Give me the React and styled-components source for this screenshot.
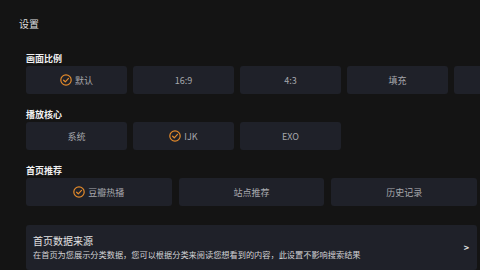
import styled, { createGlobalStyle } from 'styled-components';

const GlobalStyle = createGlobalStyle`
  html, body {
    margin: 0;
    padding: 0;
    background: #141414;
    overflow: hidden;
  }
  body {
    font-family: "Noto Sans CJK SC", "Noto Sans", sans-serif;
  }
`;

const Page = styled.div`
  width: 480px;
  height: 270px;
  padding: 18px 3px 0 26px;
  box-sizing: border-box;
  display: flex;
  flex-direction: column;
`;

const Title = styled.div`
  margin-left: -7px;
  height: 12px;
  line-height: 12px;
  font-size: 10px;
  color: #dedede;
  margin-bottom: 23px;
`;

const Section = styled.section`
  display: flex;
  flex-direction: column;
  margin-bottom: ${({ $gap }) => $gap}px;
`;

const Label = styled.div`
  height: 12px;
  line-height: 12px;
  font-size: 9px;
  font-weight: 700;
  color: #f0f0f0;
  margin-bottom: 1px;
`;

const FlexRow = styled.div`
  display: flex;
  gap: 6px;
`;

const GridRow = styled.div`
  display: grid;
  grid-template-columns: repeat(3, 1fr);
  gap: 7px;
`;

const Option = styled.div`
  flex: 0 0 ${({ $width }) => ($width ? `${$width}px` : 'auto')};
  height: 28px;
  border-radius: 3px;
  background: #1f2129;
  display: flex;
  align-items: center;
  justify-content: center;
  gap: 3px;
  font-size: 9px;
  color: #a7a8ad;
  white-space: nowrap;
`;

const Card = styled.div`
  height: 45px;
  border-radius: 3px;
  background: #1f2129;
  box-sizing: border-box;
  padding: 9px 8px 0 7px;
  display: flex;
  align-items: flex-start;
  justify-content: space-between;
`;

const CardText = styled.div`
  display: flex;
  flex-direction: column;
`;

const CardTitle = styled.div`
  font-size: 10px;
  line-height: 13px;
  color: #e2e2e2;
  margin-bottom: 1.5px;
`;

const CardDesc = styled.div`
  font-size: 8.2px;
  line-height: 11px;
  color: #d2d2d5;
  white-space: nowrap;
`;

const Arrow = styled.div`
  align-self: center;
  margin-top: -9px;
  font-size: 9px;
  font-weight: 700;
  color: #e0e0e0;
`;

const Check = () => (
  <svg width="12" height="12" viewBox="0 0 12 12" fill="none">
    <circle cx="6" cy="6" r="5.2" stroke="#e38a2b" strokeWidth="1.2" />
    <path d="M3.6 6.2 L5.3 7.8 L8.5 4.4" stroke="#e38a2b" strokeWidth="1.2" strokeLinecap="round" strokeLinejoin="round" />
  </svg>
);

const ratios = ['默认', '16:9', '4:3', '填充', ''];
const cores = ['系统', 'IJK', 'EXO'];
const homes = ['豆瓣热播', '站点推荐', '历史记录'];

export default function App() {
  return (
    <>
      <GlobalStyle />
      <Page>
        <Title>设置</Title>
        <Section $gap={15}>
          <Label>画面比例</Label>
          <FlexRow>
            {ratios.map((r, i) => (
              <Option key={i} $width={101}>
                {i === 0 && <Check />}
                {r}
              </Option>
            ))}
          </FlexRow>
        </Section>
        <Section $gap={15}>
          <Label>播放核心</Label>
          <FlexRow>
            {cores.map((c, i) => (
              <Option key={c} $width={101}>
                {i === 1 && <Check />}
                {c}
              </Option>
            ))}
          </FlexRow>
        </Section>
        <Section $gap={19}>
          <Label>首页推荐</Label>
          <GridRow>
            {homes.map((h, i) => (
              <Option key={h}>
                {i === 0 && <Check />}
                {h}
              </Option>
            ))}
          </GridRow>
        </Section>
        <Card>
          <CardText>
            <CardTitle>首页数据来源</CardTitle>
            <CardDesc>在首页为您展示分类数据，您可以根据分类来阅读您想看到的内容，此设置不影响搜索结果</CardDesc>
          </CardText>
          <Arrow>&gt;</Arrow>
        </Card>
      </Page>
    </>
  );
}
